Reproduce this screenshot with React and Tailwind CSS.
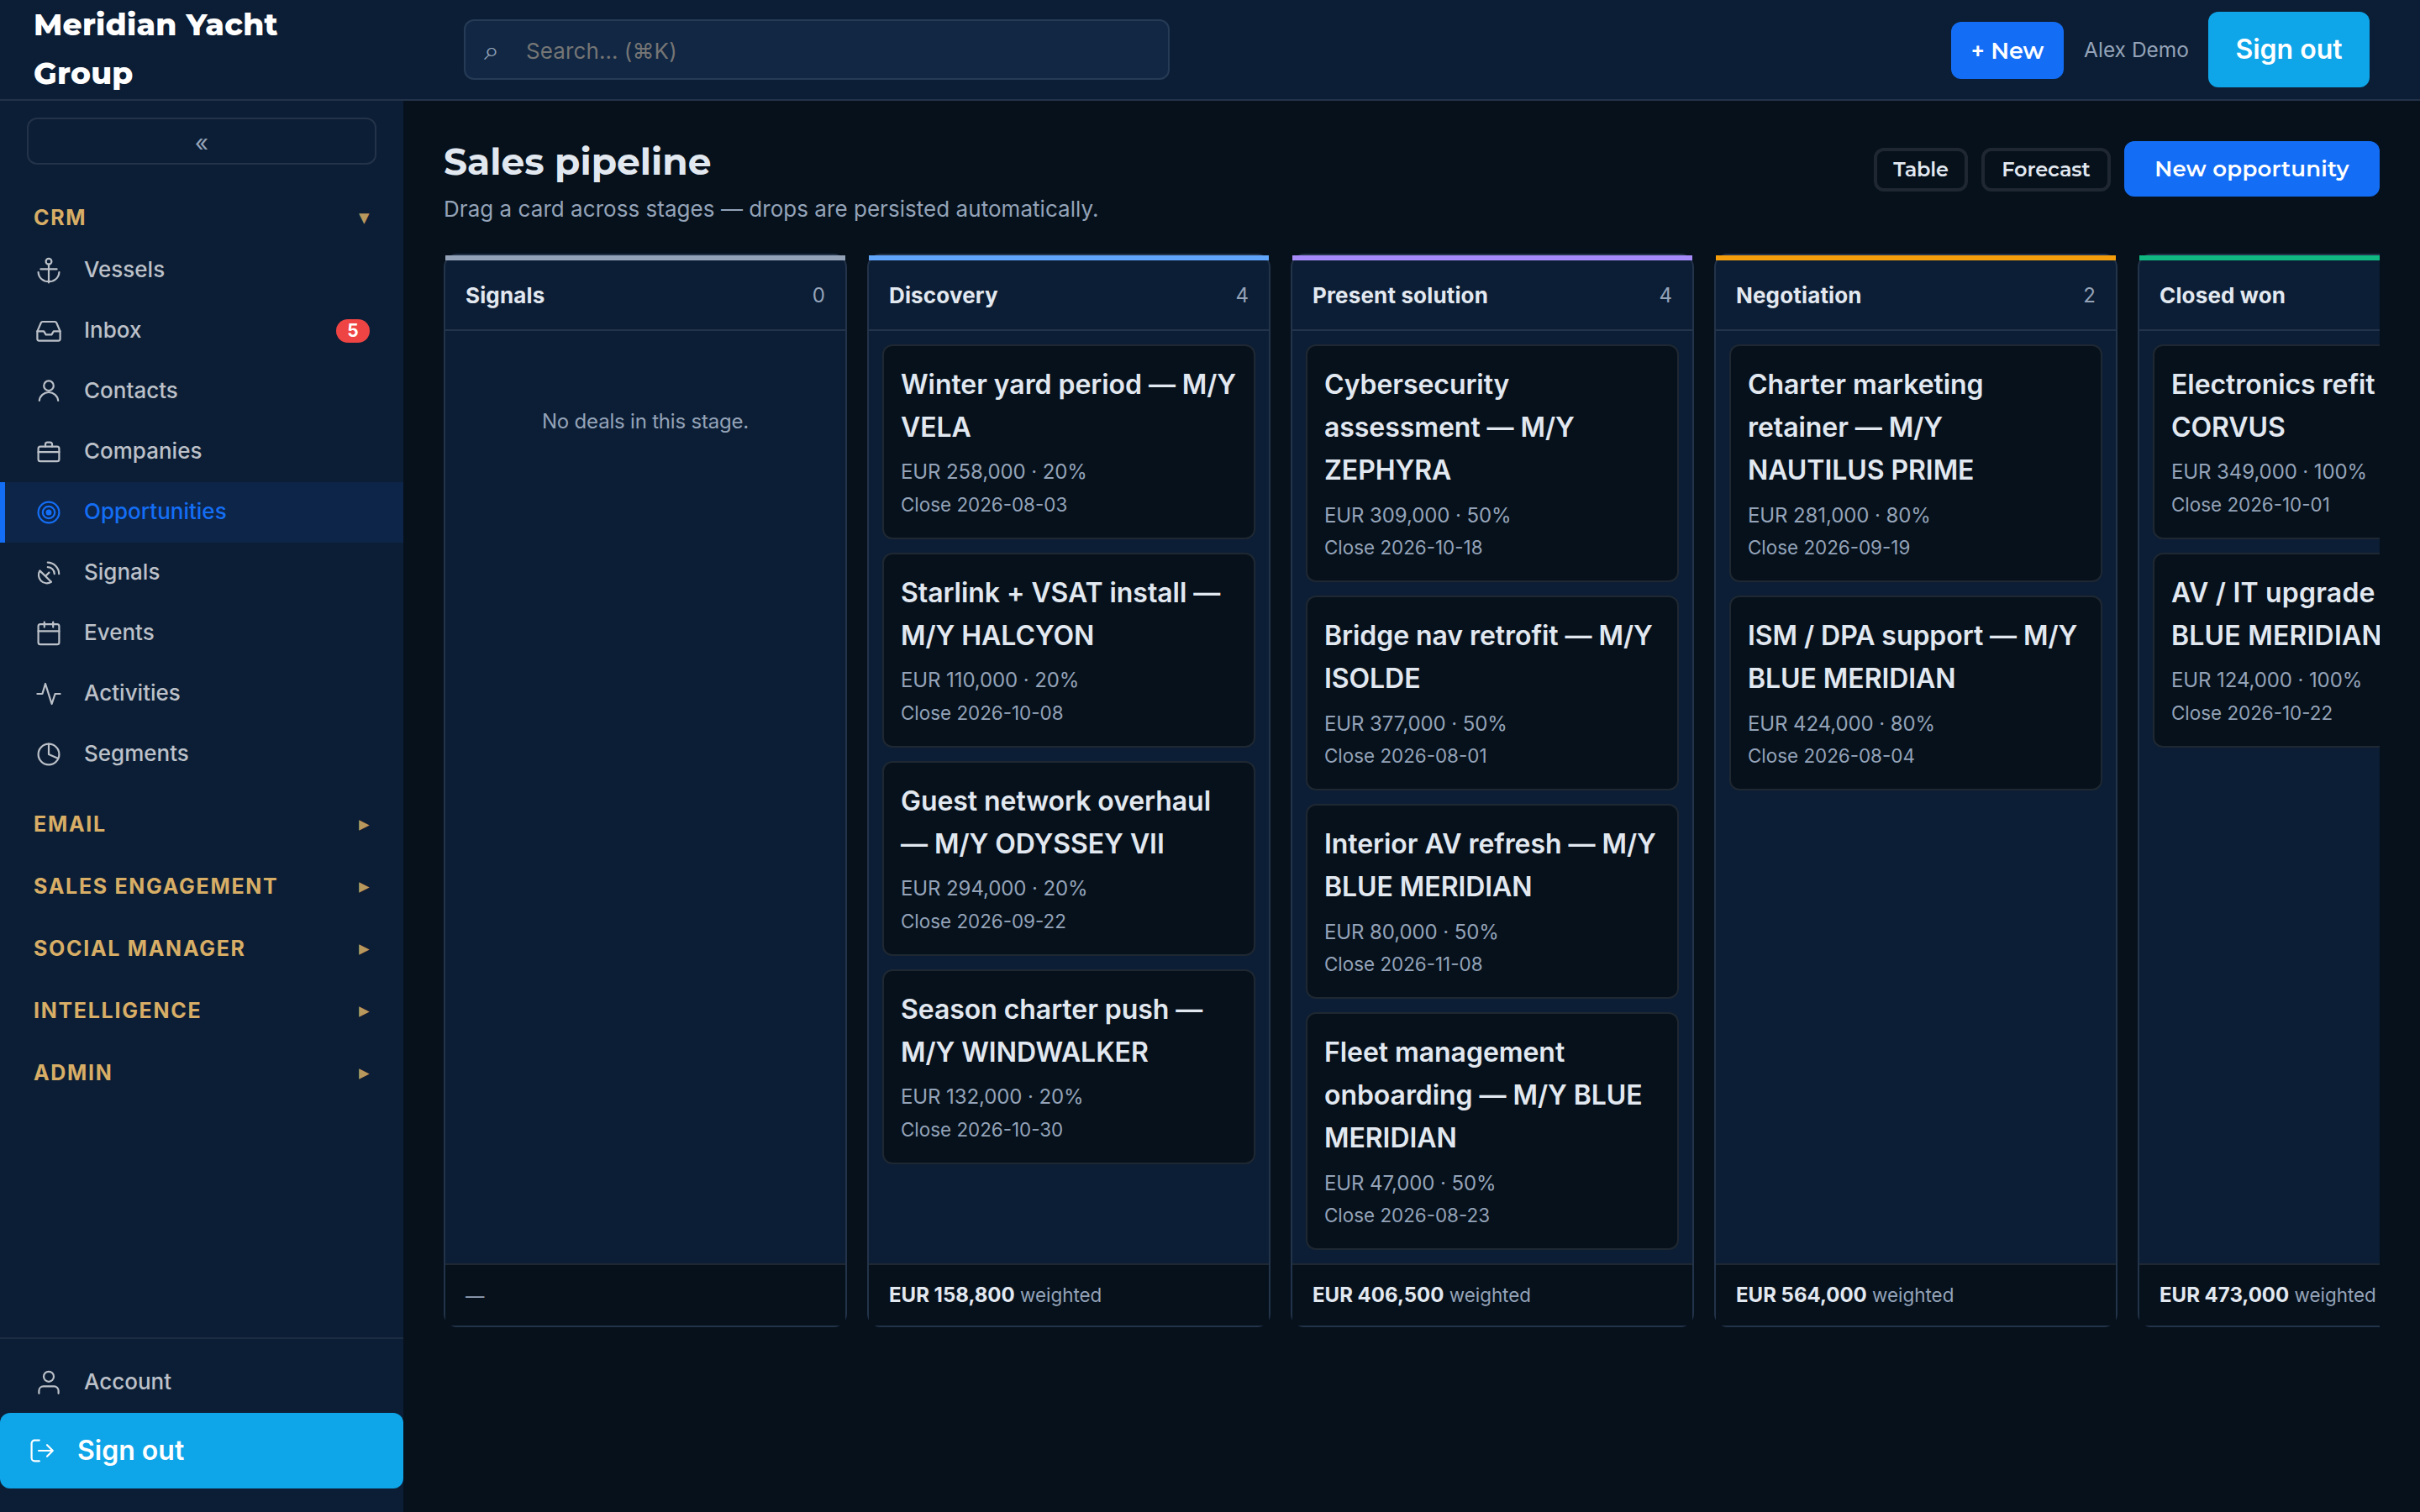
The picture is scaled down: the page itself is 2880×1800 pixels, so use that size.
import React from "react";

const NAV_ITEMS = [
  { label: "Vessels", icon: "anchor" },
  { label: "Inbox", icon: "inbox", badge: 5 },
  { label: "Contacts", icon: "contact" },
  { label: "Companies", icon: "briefcase" },
  { label: "Opportunities", icon: "target", active: true },
  { label: "Signals", icon: "dish" },
  { label: "Events", icon: "calendar" },
  { label: "Activities", icon: "pulse" },
  { label: "Segments", icon: "pie" },
];

const CLOSED_GROUPS = ["Email", "Sales Engagement", "Social Manager", "Intelligence", "Admin"];

const STAGES = [
  { name: "Signals", count: 0, stripe: "border-t-[#94a3b8]", weighted: null, deals: [] },
  {
    name: "Discovery",
    count: 4,
    stripe: "border-t-[#60a5fa]",
    weighted: "EUR 158,800",
    deals: [
      { title: "Winter yard period — M/Y VELA", value: "EUR 258,000 · 20%", close: "2026-08-03" },
      { title: "Starlink + VSAT install — M/Y HALCYON", value: "EUR 110,000 · 20%", close: "2026-10-08" },
      { title: "Guest network overhaul — M/Y ODYSSEY VII", value: "EUR 294,000 · 20%", close: "2026-09-22" },
      { title: "Season charter push — M/Y WINDWALKER", value: "EUR 132,000 · 20%", close: "2026-10-30" },
    ],
  },
  {
    name: "Present solution",
    count: 4,
    stripe: "border-t-[#a78bfa]",
    weighted: "EUR 406,500",
    deals: [
      { title: "Cybersecurity assessment — M/Y ZEPHYRA", value: "EUR 309,000 · 50%", close: "2026-10-18" },
      { title: "Bridge nav retrofit — M/Y ISOLDE", value: "EUR 377,000 · 50%", close: "2026-08-01" },
      { title: "Interior AV refresh — M/Y BLUE MERIDIAN", value: "EUR 80,000 · 50%", close: "2026-11-08" },
      { title: "Fleet management onboarding — M/Y BLUE MERIDIAN", value: "EUR 47,000 · 50%", close: "2026-08-23" },
    ],
  },
  {
    name: "Negotiation",
    count: 2,
    stripe: "border-t-[#f59e0b]",
    weighted: "EUR 564,000",
    deals: [
      { title: "Charter marketing retainer — M/Y NAUTILUS PRIME", value: "EUR 281,000 · 80%", close: "2026-09-19" },
      { title: "ISM / DPA support — M/Y BLUE MERIDIAN", value: "EUR 424,000 · 80%", close: "2026-08-04" },
    ],
  },
  {
    name: "Closed won",
    count: 2,
    stripe: "border-t-[#10b981]",
    weighted: "EUR 473,000",
    deals: [
      { title: "Electronics refit — M/Y CORVUS", value: "EUR 349,000 · 100%", close: "2026-10-01" },
      { title: "AV / IT upgrade — M/Y BLUE MERIDIAN", value: "EUR 124,000 · 100%", close: "2026-10-22", loose: true },
    ],
  },
];

// all icons share an 18 unit grid
const ICONS = {
  anchor: (
    <>
      <circle cx="9" cy="3.6" r="1.7" />
      <path d="M9 5.3v10.9M4.2 8.2h9.6M2.8 10c.2 3.5 2.9 5.6 6.2 5.6s6-2.1 6.2-5.6" />
    </>
  ),
  inbox: (
    <>
      <path d="M2.2 9.2 4.4 4.1a1 1 0 0 1 .9-.6h7.4a1 1 0 0 1 .9.6l2.2 5.1v4.6a1 1 0 0 1-1 1H3.2a1 1 0 0 1-1-1z" />
      <path d="M2.2 9.2h3.9l1.2 2h3.4l1.2-2h3.9" />
    </>
  ),
  contact: (
    <>
      <circle cx="9" cy="5.6" r="2.9" />
      <path d="M3.4 14.4c.3-2.8 2.7-4.9 5.6-4.9s5.3 2.1 5.6 4.9" />
    </>
  ),
  briefcase: (
    <>
      <rect x="2.8" y="5.8" width="12.4" height="8.8" rx="1.2" />
      <path d="M7 5.8V4.5a1.2 1.2 0 0 1 1.2-1.2h1.6A1.2 1.2 0 0 1 11 4.5v1.3M2.8 9.1h12.4" />
    </>
  ),
  target: (
    <>
      <circle cx="9" cy="9" r="6.2" />
      <circle cx="9" cy="9" r="3.6" />
      <circle cx="9" cy="9" r="1.2" fill="currentColor" />
    </>
  ),
  dish: (
    <>
      <path d="M3.7 7.7 10.5 14.4A4.9 4.9 0 0 1 3.7 7.7zM7 11l2.2-2.2" />
      <path d="M8.4 5.6a4 4 0 0 1 4 4M8.4 2.8a6.8 6.8 0 0 1 6.7 6.8" />
    </>
  ),
  calendar: (
    <>
      <rect x="2.8" y="3.6" width="12.4" height="12" rx="1.2" />
      <path d="M6.4 2.3v3M11.6 2.3v3M2.8 7.7h12.4" />
    </>
  ),
  pulse: <path d="M2.2 9h3l1.8-6 3.8 12 2-6h3" />,
  pie: (
    <>
      <circle cx="9" cy="9" r="6.2" />
      <path d="M9 2.8V9l5.4 2.4" />
    </>
  ),
  account: (
    <>
      <circle cx="9" cy="5.4" r="3" />
      <path d="M3.2 15.4v-1.6a2.6 2.6 0 0 1 2.6-2.6h6.4a2.6 2.6 0 0 1 2.6 2.6v1.6" />
    </>
  ),
  logout: (
    <>
      <path d="M7.4 2.8H4.6a1.8 1.8 0 0 0-1.8 1.8v8.8a1.8 1.8 0 0 0 1.8 1.8h2.8" />
      <path d="M7 9h8.4M12 5.6 15.4 9 12 12.4" />
    </>
  ),
};

const Icon = ({ name }) => (
  <svg
    viewBox="0 0 18 18"
    className="w-9 h-9 shrink-0"
    fill="none"
    stroke="currentColor"
    strokeWidth="1.1"
    strokeLinecap="round"
    strokeLinejoin="round"
  >
    {ICONS[name]}
  </svg>
);

const NavItem = ({ item }) => (
  <a
    className={`flex items-center h-[72px] pr-10 gap-6 border-l-[6px] pl-[34px] text-[26px] font-medium ${
      item.active
        ? "bg-[#0d2548] border-[#146ef5] text-[#146ef5]"
        : "border-transparent text-[#bcc1c9]"
    }`}
  >
    <Icon name={item.icon} />
    <span className="flex-1 pb-[3px]">{item.label}</span>
    {item.badge && (
      <span className="flex items-center justify-center w-10 h-7 rounded-[14px] bg-[#ef4444] text-white text-[21px] font-bold">
        {item.badge}
      </span>
    )}
  </a>
);

const GroupHeader = ({ label, open }) => (
  <div className="flex items-center justify-between h-[54px] px-10 pt-[2px] text-[25px] font-bold uppercase tracking-[1.7px] text-[#d8ae66]">
    <span>{label}</span>
    <span className="pb-[3px] text-[25px] leading-none tracking-normal opacity-85 font-normal">{open ? "▾" : "▸"}</span>
  </div>
);

const Sidebar = () => (
  <aside className="w-[480px] shrink-0 flex flex-col bg-[#0c1e35]">
    <button className="mx-8 mt-5 h-14 shrink-0 pt-[3px] rounded-xl border-2 border-[#233349] text-[#94a3b8] text-[28px] flex items-center justify-center">
      «
    </button>
    <div className="mt-9">
      <GroupHeader label="CRM" open />
      <nav>
        {NAV_ITEMS.map((item) => (
          <NavItem key={item.label} item={item} />
        ))}
      </nav>
    </div>
    {CLOSED_GROUPS.map((label) => (
      <div key={label} className="mt-5">
        <GroupHeader label={label} />
      </div>
    ))}

    <div className="mt-auto pt-4 pb-7 border-t-2 border-[#1c2d42]">
      <NavItem item={{ label: "Account", icon: "account" }} />
      <button className="flex items-center w-full h-[90px] rounded-xl bg-[#0ea5e9] text-white px-8 gap-6 text-[32px] font-semibold">
        <Icon name="logout" />
        Sign out
      </button>
    </div>
  </aside>
);

const Header = () => (
  <header className="flex items-center h-[120px] shrink-0 bg-[#0c1e35] border-b-2 border-[#233349]">
    <div className="w-[480px] shrink-0 px-10 font-[Montserrat,Inter,sans-serif] font-extrabold text-[36px] leading-[57.6px] tracking-[0.25px] text-white">
      Meridian Yacht Group
    </div>
    <div className="ml-[72px] w-[840px] h-[72px] flex items-center rounded-xl border-2 border-[#263b56] bg-[#112743] px-[22px] pt-[2px]">
      <span className="w-[50px] text-[32px] leading-none text-[#94a3b8]">⌕</span>
      <span className="text-[26px] tracking-[0.1px] text-[#757575]">Search… (⌘K)</span>
    </div>
    <div className="ml-auto mr-[60px] flex items-center gap-6">
      <button className="w-[134px] h-[68px] pt-[2px] mt-[2px] rounded-xl bg-[#146ef5] text-white font-[Montserrat,Inter,sans-serif] font-semibold text-[27px]">
        + New
      </button>
      <span className="pt-[1px] -mr-px text-[24.5px] text-[#94a3b8]">Alex Demo</span>
      <button className="w-[192px] h-[90px] rounded-xl bg-[#0ea5e9] text-white text-[32px] font-semibold">Sign out</button>
    </div>
  </header>
);

const DealCard = ({ deal }) => (
  <div className="rounded-xl border-2 border-[#1f2832] bg-[#06111c] px-5 pt-[19.6px] pb-[22px]">
    <div
      className={`text-[32px] leading-[51.2px] font-semibold text-[#e2e8f0] ${
        deal.loose ? "tracking-[0.2px]" : "tracking-[-0.06px]"
      }`}
    >
      {deal.title}
    </div>
    <div className="mt-[9.4px] text-[24px] leading-[38.4px] tracking-[-0.1px] text-[#94a3b8]">{deal.value}</div>
    <div className="mt-[1px] text-[22.4px] leading-[35.2px] text-[#94a3b8]">Close {deal.close}</div>
  </div>
);

const StageColumn = ({ stage }) => (
  <section className="w-[480px] shrink-0 flex flex-col rounded-2xl border-2 border-[#233349] bg-[#0c1e35]">
    <div
      className={`flex items-center justify-between h-[90px] shrink-0 px-6 border-t-[6px] border-b-2 border-b-[#233349] ${stage.stripe}`}
    >
      <span className="text-[26px] font-bold tracking-[0.15px] text-[#e2e8f0]">{stage.name}</span>
      <span className="pt-[2px] text-[24px] text-[#94a3b8]">{stage.count}</span>
    </div>
    <div className="flex-1 flex flex-col gap-4 p-4">
      {stage.deals.length === 0 ? (
        <p className="mt-[72px] text-center text-[24px] leading-[40px] tracking-[-0.2px] text-[#94a3b8]">
          No deals in this stage.
        </p>
      ) : (
        stage.deals.map((deal) => <DealCard key={deal.title} deal={deal} />)
      )}
    </div>
    <div className="flex items-center h-[74px] shrink-0 px-6 border-t-2 border-[#1f2832] bg-[#06111c] text-[22.4px] text-[#94a3b8]">
      {stage.weighted ? (
        <span>
          <strong className="text-[24px] font-bold text-[#e2e8f0]">{stage.weighted}</strong> weighted
        </span>
      ) : (
        <span>—</span>
      )}
    </div>
  </section>
);

const App = () => {
  return (
    <div className="w-[2880px] h-[1800px] overflow-hidden flex flex-col bg-[#06111c] font-[Inter,sans-serif]">
      <Header />
      <div className="flex flex-1 min-h-0">
        <Sidebar />
        <main className="flex-1 min-w-0 px-12 pt-10">
          <div className="flex items-start justify-between h-[142px]">
            <div>
              <h1 className="font-[Montserrat,Inter,sans-serif] font-bold text-[44px] leading-[64px] text-[#e2e8f0]">
                Sales pipeline
              </h1>
              <p className="mt-1 text-[26px] leading-[42px] tracking-[0.04px] text-[#94a3b8]">
                Drag a card across stages — drops are persisted automatically.
              </p>
            </div>
            <div className="flex items-center gap-4 mt-2 font-[Montserrat,Inter,sans-serif] font-semibold">
              <button className="w-[112px] h-[52px] mt-[2px] rounded-xl border-4 border-[#1f2832] text-[#e2e8f0] text-[24px] leading-[44px] tracking-[-0.2px]">
                Table
              </button>
              <button className="w-[154px] h-[52px] mt-[2px] rounded-xl border-4 border-[#1f2832] text-[#e2e8f0] text-[24px] leading-[44px] tracking-[-0.1px]">
                Forecast
              </button>
              <button className="w-[304px] h-[66px] rounded-xl bg-[#146ef5] text-white text-[26px] tracking-[0.25px]">
                New opportunity
              </button>
            </div>
          </div>
          <div className="flex gap-6 overflow-hidden">
            {STAGES.map((stage) => (
              <StageColumn key={stage.name} stage={stage} />
            ))}
          </div>
        </main>
      </div>
    </div>
  );
};

export default App;
